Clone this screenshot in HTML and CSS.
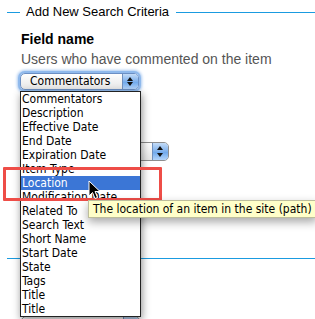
FILE: index.html
```html
<!DOCTYPE html>
<html lang="en">
<head>
    <meta charset="UTF-8">
    <title>Add New Search Criteria</title>
    <link rel="stylesheet" href="styles.css">
</head>
<body>
    <fieldset class="criteria">
        <legend>Add New Search Criteria</legend>

        <div class="field">
            <div class="field-label">Field name</div>
            <div class="field-help">Users who have commented on the item</div>
            <div class="select focused">
                <span class="select-value">Commentators</span>
                <span class="stepper"><span class="up"></span><span class="down"></span></span>
            </div>
        </div>

        <div class="field second">
            <div class="select wide">
                <span class="select-value">Is</span>
                <span class="stepper"><span class="up"></span><span class="down"></span></span>
            </div>
        </div>
    </fieldset>

    <fieldset class="criteria next">
        <div class="select">
            <span class="select-value"></span>
            <span class="stepper"><span class="up"></span><span class="down"></span></span>
        </div>
    </fieldset>

    <ul class="dropdown">
        <li>Commentators</li>
        <li>Description</li>
        <li>Effective Date</li>
        <li>End Date</li>
        <li>Expiration Date</li>
        <li>Item Type</li>
        <li class="selected">Location</li>
        <li>Modification Date</li>
        <li>Related To</li>
        <li>Search Text</li>
        <li>Short Name</li>
        <li>Start Date</li>
        <li>State</li>
        <li>Tags</li>
        <li>Title</li>
        <li>Title</li>
    </ul>

    <div class="highlight"></div>

    <div class="tooltip">The location of an item in the site (path)</div>

    <svg class="cursor" width="13" height="20" viewBox="0 0 13 20">
        <path d="M1 1 L1 16 L4.5 12.5 L7 18.5 L9.5 17.5 L7 11.5 L12 11.5 Z" fill="#000" stroke="#fff" stroke-width="1" stroke-linejoin="round"/>
    </svg>
</body>
</html>
```

FILE: styles.css
```css
body { margin: 0; font-family: "Liberation Sans", Arial, sans-serif; background: #fff; width: 315px; height: 319px; overflow: hidden; position: relative; }

.criteria { margin: 5px 0 0 7px; padding: 0 0 0 14px; border: none; border-top: 1px solid #1a9be0; min-width: 0; }
.criteria legend { font-size: 13px; color: #000; padding: 0 7px 0 6px; margin-left: -1px; line-height: 14px; }
.criteria.next { margin-top: 0; padding-top: 52px; }

.field { padding-top: 12px; }
.field-label { font-size: 14px; font-weight: bold; line-height: 17px; }
.field-help { font-size: 14px; color: #555; line-height: 17px; margin-top: 3px; }
.field.second { padding-top: 0; margin-top: 52px; height: 116px; }

.select { position: relative; width: 117px; height: 15px; margin-top: 5px; border: 1px solid #8e8e8e; border-radius: 5px; background: linear-gradient(#fefefe, #e6e6e6); font-family: "DejaVu Sans", sans-serif; font-stretch: condensed; font-size: 12px; line-height: 15px; }
.select.focused { margin-left: -1px; box-shadow: 0 0 0 2px #8fb9ec, 0 0 3px 3px #a9c9f1; border-color: #6b8fc4; }
.select.wide { width: 147px; height: 17px; margin-top: 6px; margin-left: -1px; }
.select-value { padding-left: 9px; }
.stepper { position: absolute; right: 0; top: 0; bottom: 0; width: 15px; border-radius: 0 4px 4px 0; background: linear-gradient(#c4dcf7, #7eb0ec 50%, #6aa5ea 51%, #b3d4fa); border-left: 1px solid #6f8fbd; }
.stepper .up, .stepper .down { position: absolute; left: 4px; width: 0; height: 0; border-left: 3px solid transparent; border-right: 3px solid transparent; }
.stepper .up { top: 3px; border-bottom: 4px solid #111; }
.stepper .down { bottom: 3px; border-top: 4px solid #111; }

.dropdown { position: absolute; left: 20px; top: 91px; width: 119px; margin: 0; padding: 0; list-style: none; background: #fff; border: 1px solid #222; box-shadow: 1px 3px 8px rgba(0, 0, 0, 0.45); font-family: "DejaVu Sans", sans-serif; font-stretch: condensed; font-size: 12px; }
.dropdown li { height: 14px; line-height: 14px; padding-left: 1px; white-space: nowrap; overflow: hidden; color: #000; }
.dropdown li.selected { background: #3b76d6; color: #fff; }

.highlight { position: absolute; left: 3px; top: 167px; width: 153px; height: 28px; border: 3px solid #ee4d47; border-radius: 1px; }

.tooltip { position: absolute; left: 88px; top: 200px; padding: 0 4px; height: 16px; line-height: 16px; background: #ffffc9; border: 1px solid #bdbd9c; font-family: "DejaVu Sans", sans-serif; font-stretch: condensed; font-size: 12px; white-space: nowrap; box-shadow: 0 4px 10px rgba(0, 0, 0, 0.35); }

.cursor { position: absolute; left: 88px; top: 180px; }
```
